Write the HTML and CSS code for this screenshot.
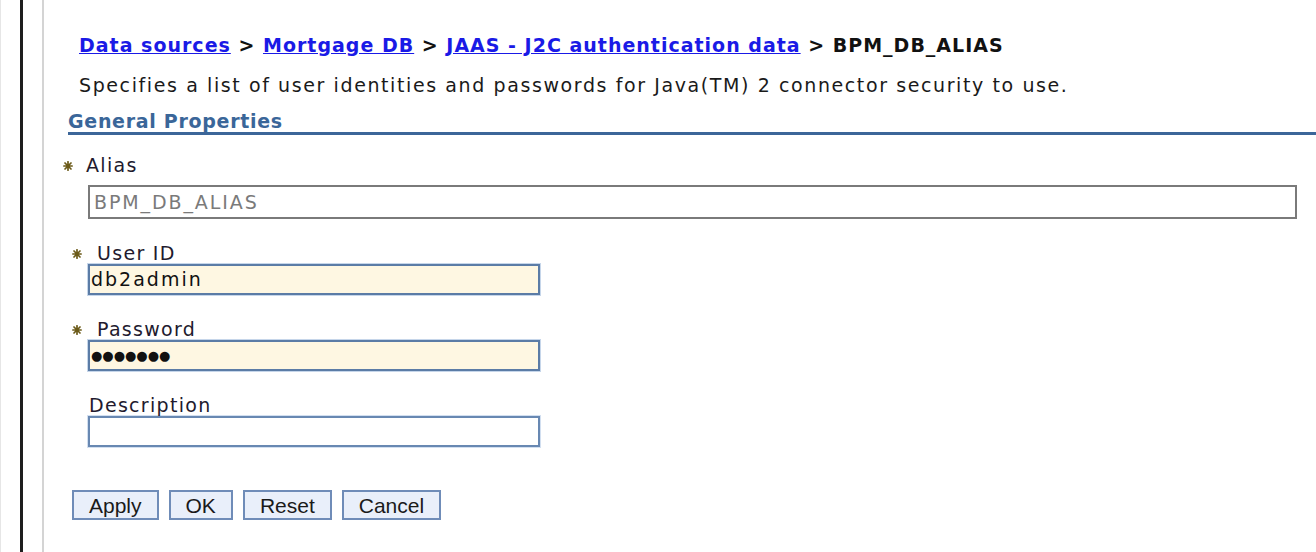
FILE: index.html
```html
<!DOCTYPE html>
<html>
<head>
<meta charset="utf-8">
<link rel="stylesheet" href="styles.css">
</head>
<body>
<div class="page">
  <div class="strip"></div>
  <div class="frame">
    <div class="content">
      <div class="crumbs">
        <a href="#">Data sources</a> &gt; <a href="#">Mortgage DB</a> &gt; <a href="#">JAAS - J2C authentication data</a> &gt; <span class="current">BPM_DB_ALIAS</span>
      </div>
      <p class="desc">Specifies a list of user identities and passwords for Java(TM) 2 connector security to use.</p>
      <div class="section">General Properties</div>
      <div class="field field-alias">
        <div class="label label-alias"><svg class="req" viewBox="0 0 10 10"><g stroke="#6b5a18" stroke-width="1.7" stroke-linecap="round"><line x1="5" y1="0.8" x2="5" y2="9.2"/><line x1="0.8" y1="5" x2="9.2" y2="5"/><line x1="2" y1="2" x2="8" y2="8"/><line x1="8" y1="2" x2="2" y2="8"/></g><circle cx="5" cy="5" r="2" fill="#6b5a18"/></svg>Alias</div>
        <div class="input input-ro">BPM_DB_ALIAS</div>
      </div>
      <div class="field">
        <div class="label label-in"><svg class="req" viewBox="0 0 10 10"><g stroke="#6b5a18" stroke-width="1.7" stroke-linecap="round"><line x1="5" y1="0.8" x2="5" y2="9.2"/><line x1="0.8" y1="5" x2="9.2" y2="5"/><line x1="2" y1="2" x2="8" y2="8"/><line x1="8" y1="2" x2="2" y2="8"/></g><circle cx="5" cy="5" r="2" fill="#6b5a18"/></svg>User ID</div>
        <div class="input input-req">db2admin</div>
      </div>
      <div class="field">
        <div class="label label-in"><svg class="req" viewBox="0 0 10 10"><g stroke="#6b5a18" stroke-width="1.7" stroke-linecap="round"><line x1="5" y1="0.8" x2="5" y2="9.2"/><line x1="0.8" y1="5" x2="9.2" y2="5"/><line x1="2" y1="2" x2="8" y2="8"/><line x1="8" y1="2" x2="2" y2="8"/></g><circle cx="5" cy="5" r="2" fill="#6b5a18"/></svg>Password</div>
        <div class="input input-req pw">&#x25CF;&#x25CF;&#x25CF;&#x25CF;&#x25CF;&#x25CF;&#x25CF;</div>
      </div>
      <div class="field">
        <div class="label label-plain">Description</div>
        <div class="input input-plain"></div>
      </div>
      <div class="buttons">
        <button class="btn">Apply</button>
        <button class="btn">OK</button>
        <button class="btn">Reset</button>
        <button class="btn">Cancel</button>
      </div>
    </div>
  </div>
</div>
</body>
</html>
```
FILE: styles.css
```css
html, body {
  margin: 0;
  padding: 0;
  background: #ffffff;
}
body {
  font-family: "DejaVu Sans", Verdana, sans-serif;
  font-size: 19px;
  color: #1a1a1a;
}
.page {
  display: flex;
  height: 552px;
  overflow: hidden;
}
.strip {
  width: 20px;
  flex: none;
  border-left: 1px solid #e6e6e6;
  box-sizing: border-box;
}
.frame {
  flex: 1;
  min-width: 0;
  border-left: 3px solid #1e1e1e;
}
.content {
  margin-left: 19px;
  height: 100%;
  box-sizing: border-box;
  border-left: 2px solid #d4d4d4;
  padding: 33px 0 0 24px;
}
.crumbs {
  padding-left: 11px;
  font-weight: bold;
  line-height: 24px;
  color: #111;
  white-space: nowrap;
  letter-spacing: 1px;
}
.crumbs a {
  color: #1a1ae6;
  text-decoration: underline;
}
.desc {
  margin: 16px 0 0 0;
  padding-left: 11px;
  line-height: 24px;
  color: #1a1a1a;
  white-space: nowrap;
  letter-spacing: 1.6px;
}
.section {
  margin-top: 13px;
  font-weight: bold;
  color: #3a6699;
  line-height: 22px;
  letter-spacing: 0.7px;
  border-bottom: 3px solid #3c6699;
}
.field {
  margin-top: 23px;
}
.field-alias {
  margin-top: 19px;
}
.label {
  line-height: 22px;
  color: #221a2e;
  letter-spacing: 1.3px;
  white-space: nowrap;
}
.label-alias {
  margin-left: -5px;
}
.label-in {
  padding-left: 4px;
}
.label-plain {
  padding-left: 21px;
}
.req {
  width: 10px;
  height: 10px;
  vertical-align: 1px;
  margin-right: 13px;
}
.label-in .req {
  margin-right: 15px;
}
.input {
  margin-left: 20px;
  box-sizing: border-box;
  height: 31px;
  line-height: 27px;
  padding: 0 4px;
  letter-spacing: 2px;
  white-space: nowrap;
}
.input-ro {
  margin-top: 9px;
  width: 1209px;
  border: 2px solid #7a7a7a;
  color: #7a7a7a;
  height: 34px;
  line-height: 30px;
  letter-spacing: 1.9px;
}
.input-req {
  width: 452px;
  background: #fef7e2;
  border: 2px solid #5b7ca6;
  box-shadow: 0 0 0 1px #c6d6ea;
  color: #111;
  padding: 0 1px;
}
.pw {
  font-size: 13px;
  letter-spacing: 0;
}
.input-plain {
  width: 452px;
  background: #fff;
  border: 2px solid #6888b2;
  box-shadow: 0 0 0 1px #d2dff0;
}
.buttons {
  display: flex;
  gap: 10px;
  margin-top: 43px;
  margin-left: 4px;
}
.btn {
  font-family: "Liberation Sans", Arial, sans-serif;
  font-size: 21px;
  color: #1a1a1a;
  background: #e9effa;
  border: 2px solid #6f8cb8;
  height: 30px;
  padding: 2px 15px 0;
  line-height: 24px;
  margin: 0;
}
```
